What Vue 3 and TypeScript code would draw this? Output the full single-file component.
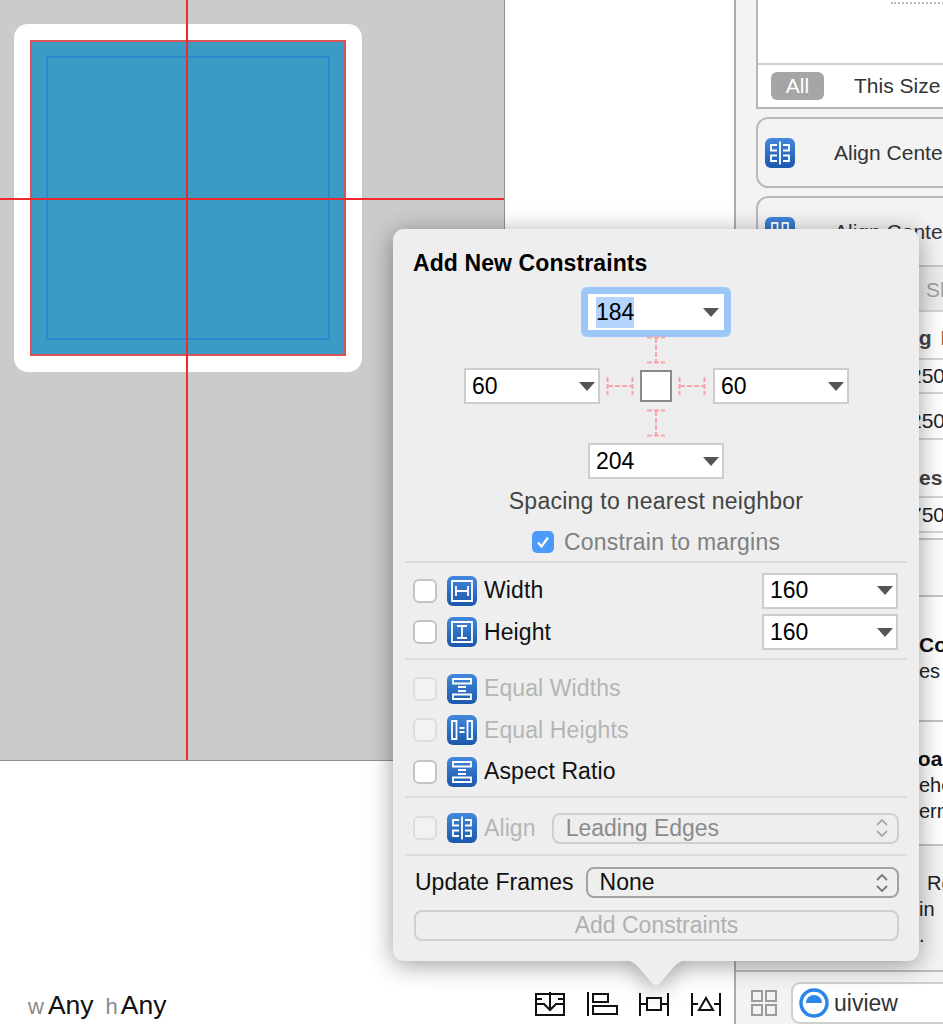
<script setup lang="ts">
interface ConstraintRow {
  label: string
  icon: string
  disabled?: boolean
  value?: string
}

const sizeRows: ConstraintRow[] = [
  { label: 'Width', icon: 'ic-width', value: '160' },
  { label: 'Height', icon: 'ic-height', value: '160' },
]

const equalRows: ConstraintRow[] = [
  { label: 'Equal Widths', icon: 'ic-equal-w', disabled: true },
  { label: 'Equal Heights', icon: 'ic-equal-h', disabled: true },
  { label: 'Aspect Ratio', icon: 'ic-equal-w' },
]

const priorityRows = [
  { text: '250', gap: 10, h: 34 },
  { text: '250', gap: 10, h: 36 },
]
</script>

<template>
  <div class="screen">
    <svg class="defs" width="0" height="0" aria-hidden="true">
      <defs>
        <linearGradient id="tile" x1="0" y1="0" x2="0" y2="1">
          <stop offset="0" stop-color="#4288dc" />
          <stop offset="1" stop-color="#1c58ab" />
        </linearGradient>
        <symbol id="ic-width" viewBox="0 0 30 30">
          <rect width="30" height="30" rx="6" fill="url(#tile)" />
          <path d="M5 5h20v20H5zM9 10v10M21 10v10M9 15h12" fill="none" stroke="#fff" stroke-width="1.800" />
        </symbol>
        <symbol id="ic-height" viewBox="0 0 30 30">
          <rect width="30" height="30" rx="6" fill="url(#tile)" />
          <path d="M5 5h20v20H5zM10 9h10M10 21h10M15 9v12" fill="none" stroke="#fff" stroke-width="1.800" />
        </symbol>
        <symbol id="ic-equal-w" viewBox="0 0 30 30">
          <rect width="30" height="30" rx="6" fill="url(#tile)" />
          <path d="M6 5h18v4.500H6zM6 20.500h18V25H6zM11 13h8M11 17h8" fill="none" stroke="#fff" stroke-width="1.800" />
        </symbol>
        <symbol id="ic-equal-h" viewBox="0 0 30 30">
          <rect width="30" height="30" rx="6" fill="url(#tile)" />
          <path d="M5 6h4.500v18H5zM20.500 6H25v18h-4.500zM12.500 13h5M12.500 17h5" fill="none" stroke="#fff" stroke-width="1.800" />
        </symbol>
        <symbol id="ic-align" viewBox="0 0 30 30">
          <rect width="30" height="30" rx="6" fill="url(#tile)" />
          <path d="M15 3.500v23M12 7H6v5.500h6M18 7h6v5.500h-6M12 17.500H6V23h6M18 17.500h6V23h-6" fill="none" stroke="#fff" stroke-width="1.800" />
        </symbol>
        <symbol id="ic-align-y" viewBox="0 0 30 30">
          <rect width="30" height="30" rx="6" fill="url(#tile)" />
          <path d="M3.500 15h23M7 12V6h5.500v6M17.500 12V6H23v6M7 18v6h5.500v-6M17.500 18v6H23v-6" fill="none" stroke="#fff" stroke-width="1.800" />
        </symbol>
      </defs>
    </svg>

    <div class="left">
      <div class="canvas">
        <div class="view">
          <div class="blue">
            <div class="margins"></div>
          </div>
        </div>
        <div class="guide guide-v"></div>
        <div class="guide guide-h"></div>
      </div>
      <div class="under">
        <div class="size-class">
          <span class="sc-key">w</span><span class="sc-val">Any</span>
          <span class="sc-key sc-h">h</span><span class="sc-val">Any</span>
        </div>
        <div class="tools">
          <svg width="32" height="26" viewBox="0 0 32 26">
            <path d="M1 3h30M1 24h30M2 3v21M30 3v21M2 13h9M21 13h9M16 1v17M10 13l6 6 6-6M24 8h6M2 8h6" fill="none" stroke="#111" stroke-width="2" />
          </svg>
          <svg width="32" height="26" viewBox="0 0 32 26">
            <path d="M2 1v24M7 3h15v8H7zM7 15h24v8H7z" fill="none" stroke="#111" stroke-width="2" />
          </svg>
          <svg width="32" height="26" viewBox="0 0 32 26">
            <path d="M2 2v23M30 2v23M2 13h7M23 13h7M9 7h14v12H9z" fill="none" stroke="#111" stroke-width="2" />
          </svg>
          <svg width="32" height="26" viewBox="0 0 32 26">
            <path d="M2 2v23M30 2v23M2 13h6M24 13h6M16 7l7 12H9z" fill="none" stroke="#111" stroke-width="2" />
          </svg>
        </div>
      </div>
    </div>

    <div class="inspector">
      <div class="library">
        <div class="preview">
          <div class="dots"></div>
        </div>
        <div class="tabs">
          <span class="tab-on">All</span>
          <span class="tab">This Size Class</span>
        </div>
      </div>
      <div class="lib-card">
        <svg class="tile"><use href="#ic-align" /></svg>
        <span>Align Center X</span>
      </div>
      <div class="lib-card">
        <svg class="tile"><use href="#ic-align-y" /></svg>
        <span>Align Center Y</span>
      </div>

      <div class="insp-bar"><span>Show</span></div>
      <div class="insp-body">
        <div class="insp-head head-hug">ng <span class="orange">I</span></div>
        <div
          v-for="(row, i) in priorityRows"
          :key="i"
          class="insp-num"
          :style="{ height: row.h + 'px', marginBottom: row.gap + 'px' }"
        >
          {{ row.text }}
        </div>
        <div class="insp-head head-res">es:</div>
        <div class="insp-num num-last">750</div>
      </div>
      <div class="insp-blank"></div>
      <div class="doc doc-a"><b>Co</b><span>es</span></div>
      <div class="doc doc-b"><b class="boa">boa</b><span>eho</span><span>ern</span></div>
      <div class="doc doc-c"><span class="re">Re</span><span>in</span><span>.</span></div>
      <div class="search-bar">
        <svg class="grid-ic" width="28" height="28" viewBox="0 0 28 28">
          <path d="M2 2h10v10H2zM16 2h10v10H16zM2 16h10v10H2zM16 16h10v10H16z" fill="none" stroke="#9b9b9b" stroke-width="2" />
        </svg>
        <div class="search">
          <svg width="32" height="32" viewBox="0 0 32 32">
            <circle cx="16" cy="16" r="13" fill="#fff" stroke="#2b86ec" stroke-width="3.500" />
            <path d="M8 16a8 8 0 0 1 16 0z" fill="#2b86ec" />
          </svg>
          <span>uiview</span>
        </div>
      </div>
    </div>

    <div class="popover">
      <div class="title">Add New Constraints</div>

      <div class="editor">
        <div class="ring">
          <div class="field"><span class="selected">184</span><i class="caret"></i></div>
        </div>
        <svg class="strut-v top" width="24" height="28" viewBox="0 0 24 28">
          <path d="M3 1.500h18M3 26.500h18M12 2v24" fill="none" stroke="#f6a5ad" stroke-width="2" stroke-dasharray="5 2" />
        </svg>
        <div class="middle">
          <div class="field"><span>60</span><i class="caret"></i></div>
          <svg width="28" height="24" viewBox="0 0 28 24">
            <path d="M1.500 3v18M26.500 3v18M2 12h24" fill="none" stroke="#f6a5ad" stroke-width="2" stroke-dasharray="5 2" />
          </svg>
          <div class="square"></div>
          <svg width="28" height="24" viewBox="0 0 28 24">
            <path d="M1.500 3v18M26.500 3v18M2 12h24" fill="none" stroke="#f6a5ad" stroke-width="2" stroke-dasharray="5 2" />
          </svg>
          <div class="field"><span>60</span><i class="caret"></i></div>
        </div>
        <svg class="strut-v bottom" width="24" height="28" viewBox="0 0 24 28">
          <path d="M3 1.500h18M3 26.500h18M12 2v24" fill="none" stroke="#f6a5ad" stroke-width="2" stroke-dasharray="5 2" />
        </svg>
        <div class="field"><span>204</span><i class="caret"></i></div>
      </div>

      <div class="spacing-label">Spacing to nearest neighbor</div>
      <div class="margins-row">
        <span class="check-on">
          <svg width="22" height="22" viewBox="0 0 22 22">
            <path d="M6 11.500l3.500 4L16 6.500" fill="none" stroke="#fff" stroke-width="2.200" />
          </svg>
        </span>
        <span>Constrain to margins</span>
      </div>

      <div class="section size-section">
        <div v-for="row in sizeRows" :key="row.label" class="row">
          <span class="box"></span>
          <svg class="tile"><use :href="'#' + row.icon" /></svg>
          <span class="label">{{ row.label }}</span>
          <div class="field"><span>{{ row.value }}</span><i class="caret"></i></div>
        </div>
      </div>

      <div class="section equal-section">
        <div v-for="row in equalRows" :key="row.label" class="row" :class="{ off: row.disabled }">
          <span class="box"></span>
          <svg class="tile"><use :href="'#' + row.icon" /></svg>
          <span class="label">{{ row.label }}</span>
        </div>
      </div>

      <div class="section align-section">
        <div class="row off">
          <span class="box"></span>
          <svg class="tile"><use href="#ic-align" /></svg>
          <span class="label">Align</span>
          <div class="select select-off">
            <span>Leading Edges</span>
            <svg width="14" height="22" viewBox="0 0 14 22">
              <path d="M2 8l5-5 5 5M2 14l5 5 5-5" fill="none" stroke="#aaa" stroke-width="1.800" />
            </svg>
          </div>
        </div>
      </div>

      <div class="section frames-section">
        <div class="frames">
          <span>Update Frames</span>
          <div class="select">
            <span>None</span>
            <svg width="14" height="22" viewBox="0 0 14 22">
              <path d="M2 8l5-5 5 5M2 14l5 5 5-5" fill="none" stroke="#777" stroke-width="1.800" />
            </svg>
          </div>
        </div>
        <div class="add-btn">Add Constraints</div>
      </div>

      <svg class="arrow" width="66" height="26" viewBox="0 0 66 26">
        <path d="M0 0h66c-8 0-12 3-16 8L37 23c-2 3-6 3-8 0L16 8C12 3 8 0 0 0z" fill="#eeeeee" />
      </svg>
    </div>
  </div>
</template>

<style>
html,
body {
  margin: 0;
  background: #fff;
}
</style>

<style scoped>
.screen {
  position: relative;
  display: flex;
  width: 943px;
  height: 1024px;
  overflow: hidden;
  background: #fff;
  font-family: "Liberation Sans", Arial, sans-serif;
  color: #111;
}

.defs {
  position: absolute;
}

.left {
  width: 734px;
  flex: none;
  display: flex;
  flex-direction: column;
  justify-content: space-between;
}

.canvas {
  position: relative;
  box-sizing: border-box;
  width: 505px;
  height: 761px;
  padding: 24px 0 0 14px;
  background: #cbcbcb;
  border-right: 1px solid #8f8f8f;
  border-bottom: 1px solid #8f8f8f;
}

.view {
  box-sizing: border-box;
  width: 348px;
  height: 348px;
  padding: 16px;
  background: #fff;
  border-radius: 14px;
}

.blue {
  box-sizing: border-box;
  height: 316px;
  padding: 14px;
  background: #3a9bc5;
  border: 2px solid #db5257;
}

.margins {
  box-sizing: border-box;
  height: 284px;
  border: 2px solid #2f86cd;
}

.guide {
  position: absolute;
  background: #ee2a2a;
}

.guide-v {
  left: 186px;
  top: 0;
  width: 2px;
  height: 760px;
}

.guide-h {
  left: 0;
  top: 198px;
  width: 504px;
  height: 2px;
}

.under {
  display: flex;
  align-items: center;
  justify-content: space-between;
  height: 64px;
  padding: 0 12px 0 28px;
}

.size-class {
  font-size: 26.500px;
  margin-top: 26px;
}

.sc-key {
  font-size: 22px;
  color: #8a8a8a;
  margin-right: 3px;
}

.sc-key:first-child {
  margin-right: 4px;
}

.sc-h {
  margin-left: 12px;
}

.tools {
  display: flex;
  gap: 20px;
  margin-top: 24px;
}

.inspector {
  flex: 1;
  min-width: 0;
  display: flex;
  flex-direction: column;
  background: #f3f3f3;
  border-left: 2px solid #adadad;
  white-space: nowrap;
  overflow: hidden;
}

.library {
  box-sizing: border-box;
  flex: none;
  margin-left: 20px;
  height: 109px;
  background: #fff;
  border-left: 2px solid #b5b5b5;
  border-bottom: 2px solid #b5b5b5;
}

.preview {
  position: relative;
  height: 65px;
  border-bottom: 2px solid #cfcfcf;
  box-sizing: border-box;
}

.dots {
  position: absolute;
  left: 133px;
  top: 2px;
  width: 60px;
  height: 50px;
  box-sizing: border-box;
  border-top: 2px dotted #bbb;
  border-right: 2px dotted #bbb;
}

.tabs {
  display: flex;
  align-items: center;
  height: 42px;
  padding-left: 13px;
  font-size: 21px;
  color: #333;
}

.tab-on {
  box-sizing: border-box;
  flex: none;
  width: 53px;
  height: 28px;
  line-height: 28px;
  text-align: center;
  background: #a5a5a5;
  border-radius: 6px;
  color: #fff;
}

.tab {
  margin-left: 30px;
}

.lib-card {
  box-sizing: border-box;
  flex: none;
  display: flex;
  align-items: center;
  margin: 8px 0 0 20px;
  width: 220px;
  height: 71px;
  padding-left: 7px;
  border: 2px solid #b9b9b9;
  border-radius: 12px;
  font-size: 21px;
  color: #333;
}

.lib-card .tile {
  margin-right: 39px;
}

.insp-bar {
  box-sizing: border-box;
  flex: none;
  height: 47px;
  margin-top: -2px;
  padding-left: 190px;
  line-height: 46px;
  font-size: 21px;
  color: #a0a0a0;
  background: #ececec;
  border-top: 2px solid #c6c6c6;
  border-bottom: 2px solid #d4d4d4;
  position: relative;
}

.insp-body {
  flex: none;
  background: #fff;
}

.insp-head {
  box-sizing: border-box;
  height: 48px;
  font-size: 21px;
  font-weight: bold;
  color: #444;
  line-height: 26px;
  border-bottom: 2px solid #d6d6d6;
}

.head-hug {
  padding: 13px 0 0 170px;
}

.head-res {
  padding: 15px 0 0 183px;
}

.orange {
  color: #a8683a;
  margin-left: 3px;
}

.insp-num {
  box-sizing: border-box;
  display: flex;
  align-items: center;
  padding-left: 174px;
  font-size: 21px;
  color: #222;
  border-bottom: 2px solid #d6d6d6;
}

.num-last {
  height: 35px;
  margin-bottom: 5px;
}

.insp-blank {
  box-sizing: border-box;
  flex: none;
  height: 57px;
  background: #fbfbfb;
  border-top: 2px solid #c8c8c8;
}

.doc {
  box-sizing: border-box;
  flex: none;
  background: #fff;
  font-size: 20px;
  line-height: 26px;
  display: flex;
  flex-direction: column;
  padding-left: 183px;
  border-top: 2px solid #c4c4c4;
  color: #222;
}

.doc b {
  font-size: 21px;
  color: #111;
}

.doc-a {
  height: 125px;
  padding-top: 35px;
}

.doc-b {
  height: 124px;
  padding-top: 24px;
}

.boa {
  margin-left: -14px;
}

.doc-c {
  height: 126px;
  padding-top: 24px;
  background: #f3f3f3;
}

.re {
  margin-left: 8px;
}

.search-bar {
  flex: 1;
  display: flex;
  align-items: flex-start;
  background: #f3f3f3;
  border-top: 2px solid #bdbdbd;
  padding: 10px 0 0 14px;
}

.grid-ic {
  flex: none;
  margin-top: 7px;
}

.search {
  box-sizing: border-box;
  flex: none;
  display: flex;
  align-items: center;
  gap: 4px;
  margin-left: 13px;
  width: 200px;
  height: 42px;
  padding-left: 5px;
  background: #fff;
  border: 2px solid #cfcfcf;
  border-radius: 9px;
  font-size: 23px;
  color: #333;
}

.popover {
  position: absolute;
  left: 393px;
  top: 229px;
  width: 526px;
  height: 732px;
  background: #eeeeee;
  border-radius: 11px;
  filter: drop-shadow(0 4px 12px rgba(0, 0, 0, 0.38));
  font-size: 23px;
}

.arrow {
  position: absolute;
  left: 230px;
  top: 100%;
  margin-top: -1px;
}

.title {
  margin: 21px 0 0 20px;
  height: 26px;
  line-height: 26px;
  font-weight: bold;
  font-size: 23px;
  letter-spacing: 0.1px;
  color: #000;
}

.editor {
  display: flex;
  flex-direction: column;
  align-items: center;
  margin-top: 11px;
}

.ring {
  padding: 7px;
  border-radius: 6px;
  background: #9cc6f5;
  height: 36px;
}

.field {
  box-sizing: border-box;
  display: flex;
  align-items: center;
  justify-content: space-between;
  width: 136px;
  height: 36px;
  padding: 0 3px 0 6px;
  background: #fff;
  border: 2px solid #cdcdcd;
  font-size: 23px;
  color: #000;
}

.ring .field {
  border-color: #fff;
}

.selected {
  background: #b3d4fc;
  padding: 2px 0;
}

.caret {
  width: 0;
  height: 0;
  border-left: 8px solid transparent;
  border-right: 8px solid transparent;
  border-top: 9px solid #555;
}

.strut-v.top {
  margin-top: -1px;
}

.strut-v.bottom {
  margin: 5px 0 6px;
}

.middle {
  display: flex;
  align-items: center;
  gap: 6px;
  margin: 4px 0 0 1px;
}

.middle .field:last-child {
  margin-left: 1px;
}

.square {
  box-sizing: border-box;
  width: 32px;
  height: 32px;
  background: #fff;
  border: 2px solid #8a8a8a;
}

.spacing-label {
  margin-top: 8px;
  height: 28px;
  line-height: 28px;
  text-align: center;
  color: #444;
  font-size: 23px;
  letter-spacing: 0.25px;
}

.margins-row {
  display: flex;
  align-items: center;
  justify-content: center;
  gap: 10px;
  margin-top: 16px;
  height: 22px;
  color: #808080;
  letter-spacing: 0.2px;
}

.check-on {
  width: 22px;
  height: 22px;
  border-radius: 5px;
  background: #4a9bfa;
}

.check-on svg {
  display: block;
}

.section {
  margin: 0 12px;
  border-top: 2px solid #dcdcdc;
}

.size-section {
  margin-top: 8px;
  padding: 7px 0 5px;
}

.equal-section {
  padding: 8px 0 3px;
}

.align-section {
  padding: 10px 0 5px;
}

.frames-section {
  padding: 11px 0 0;
}

.row {
  display: flex;
  align-items: center;
  height: 41.500px;
  padding-left: 8px;
}

.box {
  box-sizing: border-box;
  flex: none;
  width: 24px;
  height: 24px;
  background: #fff;
  border: 2px solid #c4c4c4;
  border-radius: 6px;
}

.tile {
  flex: none;
  width: 30px;
  height: 30px;
}

.row .tile {
  margin-left: 10px;
}

.label {
  margin-left: 7px;
  letter-spacing: 0.1px;
}

.row .field {
  margin-left: auto;
  margin-right: 9px;
}

.row.off .box {
  background: #f2f2f2;
  border-color: #dddddd;
}

.row.off .label {
  color: #b5b5b5;
}

.select {
  box-sizing: border-box;
  display: flex;
  align-items: center;
  justify-content: space-between;
  height: 31px;
  padding: 0 8px 0 12px;
  border: 2px solid #a3a3a3;
  border-radius: 8px;
  flex: 1;
}

.select-off {
  margin: 0 8px 0 16px;
  border-color: #cfcfcf;
  color: #8b8b8b;
}

.frames {
  display: flex;
  align-items: center;
  height: 31px;
  padding: 0 8px 0 10px;
  gap: 12px;
}

.add-btn {
  box-sizing: border-box;
  height: 31px;
  line-height: 27px;
  margin: 12px 8px 0 9px;
  text-align: center;
  color: #b0b0b0;
  border: 2px solid #cfcfcf;
  border-radius: 8px;
}
</style>
